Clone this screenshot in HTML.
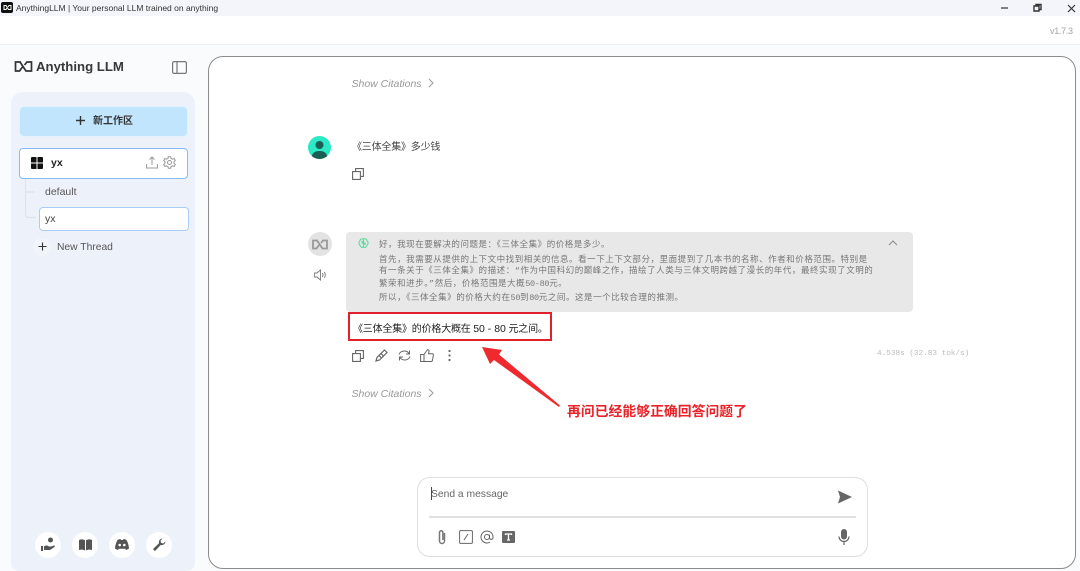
<!DOCTYPE html>
<html lang="zh"><head><meta charset="utf-8"><title>AnythingLLM</title>
<style>
html,body{margin:0;padding:0}
body{width:1080px;height:571px;overflow:hidden;background:#fff;position:relative;font-family:"Liberation Sans","Noto Sans CJK SC",sans-serif;color:#333}
div,svg{position:absolute}
#w{left:0;top:0;width:1080px;height:571px;filter:blur(.3px);overflow:hidden}
.t{white-space:nowrap}
.th{font-family:"Liberation Mono","Noto Sans CJK SC",monospace;font-size:8.5px;letter-spacing:.55px;color:#777;line-height:11px;left:379px}
.th span{letter-spacing:-.3px}
.ca{font-size:10px;letter-spacing:-.2px}
.ca span{font-size:10.500px;letter-spacing:0}
</style></head><body><div id="w">
<div style="left:0;top:0;width:1080px;height:16px;background:#f3f5fb"></div>
<div style="left:1px;top:2px;width:12px;height:11px;background:#111;border-radius:2px"></div>
<svg style="left:3px;top:4px" width="9" height="7" viewBox="0 0 18 14"><path d="M7 3H2v8h4l2-3M10 6l2-3h4v8h-5L6 3" fill="none" stroke="#fff" stroke-width="2"/></svg>
<div class="t" style="left:16px;top:2px;font-size:8.500px;line-height:12px;color:#333">AnythingLLM | Your personal LLM trained on anything</div>
<svg style="left:1000px;top:2px" width="76" height="12" viewBox="0 0 76 12"><path d="M1 6h7" stroke="#333" fill="none" stroke-width="1.200"/><path d="M34 4h5v5h-5zM36 4V2.500h5v5h-2" stroke="#333" fill="none" stroke-width="1.400"/><path d="M68 3l7 7M75 3l-7 7" stroke="#333" fill="none" stroke-width="1.200"/></svg>
<div class="t" style="left:1050px;top:25px;font-size:9px;line-height:12px;color:#a5a5a5;letter-spacing:-.3px">v1.7.3</div>
<div style="left:0;top:44px;width:1080px;height:527px;background:#f9fbfd;border-top:1px solid #eef0f4;box-sizing:border-box"></div>

<svg style="left:14px;top:60px" width="19" height="13" viewBox="0 0 19 13"><path d="M7 2H1.500v9H5.500L8.500 7M10.500 5L13 2h4.500v9H12L6 2" fill="none" stroke="#333" stroke-width="1.700"/></svg>
<div class="t" style="left:36px;top:58px;font-size:13.200px;line-height:18px;font-weight:bold;color:#383838">Anything LLM</div>
<svg style="left:172px;top:61px" width="15" height="13" viewBox="0 0 15 13"><rect x=".6" y=".6" width="13.800" height="11.800" rx="1.500" fill="none" stroke="#777" stroke-width="1.200"/><path d="M5 1v11" stroke="#777" stroke-width="1.200"/></svg>

<div style="left:11px;top:92px;width:184px;height:479px;background:#edf2fa;border-radius:12px 12px 8px 8px"></div>
<div style="left:19px;top:106px;width:169px;height:31px;background:#c0e5fd;border:1px solid #e2f2fe;box-sizing:border-box;border-radius:5px"></div>
<svg style="left:75px;top:115px" width="11" height="11"><path d="M5.500 1v9M1 5.500h9" stroke="#333" stroke-width="1.400"/></svg>
<div class="t" style="left:93px;top:115px;font-size:10px;line-height:14px;font-weight:bold;color:#333">新工作区</div>

<div style="left:19px;top:148px;width:169px;height:31px;background:#fff;border:1px solid #86bbf5;box-sizing:border-box;border-radius:4px"></div>
<svg style="left:31px;top:157px" width="12" height="12"><path d="M0 1a1 1 0 0 1 1-1h4.500v5.500H0zM6.500 0H11a1 1 0 0 1 1 1v4.500H6.500zM0 6.500h5.500V12H1a1 1 0 0 1-1-1zM6.500 6.500H12V11a1 1 0 0 1-1 1H6.500z" fill="#111"/></svg>
<div class="t" style="left:51px;top:156px;font-size:10.500px;line-height:14px;font-weight:bold;color:#222">yx</div>
<svg style="left:146px;top:156px" width="12" height="13" viewBox="0 0 12 13"><path d="M.6 8v4h10.800V8M6 9V1M3.500 3.500L6 1l2.500 2.500" fill="none" stroke="#999" stroke-width="1"/></svg>
<svg style="left:163px;top:156px" width="13" height="13" viewBox="0 0 13 13"><path d="M5.300.8h2.400l.4 1.700 1.500.7 1.600-.7 1.100 2-1.300 1.200v1.600l1.300 1.200-1.100 2-1.600-.7-1.500.7-.4 1.700H5.300l-.4-1.700-1.500-.7-1.600.7-1.100-2 1.300-1.200V5.700L.7 4.500l1.100-2 1.600.7 1.500-.7z" fill="none" stroke="#999"/><circle cx="6.500" cy="6.500" r="2" fill="none" stroke="#999"/></svg>

<svg style="left:23px;top:179px" width="14" height="41" viewBox="0 0 14 41"><path d="M2.500 0v35q0 3.500 3.500 3.500h7M2.500 13h9" fill="none" stroke="#dfe1e4" stroke-width="1.200"/></svg>
<div class="t" style="left:45px;top:185px;font-size:10.500px;line-height:14px;color:#555">default</div>
<div style="left:39px;top:207px;width:150px;height:24px;background:#fff;border:1px solid #a9cdf8;box-sizing:border-box;border-radius:4px"></div>
<div class="t" style="left:45px;top:212px;font-size:10.500px;line-height:14px;color:#444">yx</div>
<div style="left:33px;top:238px;width:18px;height:18px;border-radius:50%;background:#f1f4fa"></div>
<svg style="left:38px;top:242px" width="9" height="9"><path d="M4.500 .5v8M.5 4.500h8" stroke="#333" stroke-width="1.100"/></svg>
<div class="t" style="left:57px;top:240.500px;font-size:10.300px;line-height:14px;color:#555">New Thread</div>

<div style="left:35px;top:532px;width:26px;height:26px;border-radius:50%;background:#fff"></div>
<div style="left:72px;top:532px;width:26px;height:26px;border-radius:50%;background:#fff"></div>
<div style="left:109px;top:532px;width:26px;height:26px;border-radius:50%;background:#fff"></div>
<div style="left:146px;top:532px;width:26px;height:26px;border-radius:50%;background:#fff"></div>
<svg style="left:40px;top:537px" width="16" height="15" viewBox="0 0 16 15"><circle cx="10.500" cy="3" r="2.500" fill="#555"/><path d="M1 9h2v5H1zM4 9.500c2-1.500 3.500-1 5 0h2l3-1c1 0 1 1 .5 1.500L10 13H4z" fill="#555"/></svg>
<svg style="left:79px;top:539px" width="13" height="12" viewBox="0 0 13 12"><path d="M0 1c2-.8 4-.8 6 .3V11.500C4 10.500 2 10.500 0 11zM13 1c-2-.8-4-.8-6 .3V11.500c2-1 4-1 6-.5z" fill="#555"/></svg>
<svg style="left:115px;top:539px" width="14" height="11" viewBox="0 0 14 11"><path d="M2.500 1C4 .3 5 0 5.500 0l.5 1h2l.5-1c.5 0 1.500.3 3 1 1.500 2.500 2.300 5.500 2.500 8.500-1 .8-2 1.200-3 1.500l-.8-1.300H3.800L3 11c-1-.3-2-.7-3-1.500C.2 6.500 1 3.500 2.500 1z" fill="#555"/><circle cx="4.700" cy="6" r="1.300" fill="#fff"/><circle cx="9.300" cy="6" r="1.300" fill="#fff"/></svg>
<svg style="left:153px;top:538px" width="13" height="13" viewBox="0 0 13 13"><path d="M12.500 3.500A3.800 3.800 0 0 1 7.700 7L2.800 12.200a1.300 1.300 0 0 1-2-2L6 5.300A3.800 3.800 0 0 1 9.500.5L7.500 2.800l.6 2.100 2.100.6z" fill="#555"/></svg>

<div style="left:208px;top:56px;width:868px;height:513px;background:#fff;border:1px solid #8c8c8c;box-sizing:border-box;border-radius:15px"></div>

<div class="t" style="left:351.500px;top:77px;font-size:10.500px;line-height:14px;font-style:italic;color:#999">Show Citations</div>
<svg style="left:428px;top:78px" width="6" height="10"><path d="M1 1l4 4-4 4" fill="none" stroke="#999"/></svg>

<svg style="left:308px;top:136px;clip-path:circle(50%)" width="23" height="23" viewBox="0 0 23 23"><rect width="23" height="23" fill="#2ce8c4"/><circle cx="11.500" cy="9" r="4" fill="#1a5e56"/><path d="M3.500 23c0-6 3-8 8-8s8 2 8 8z" fill="#1a5e56"/></svg>
<div class="t ca" style="left:352px;top:141px;line-height:14px;color:#444">《三体全集》多少钱</div>
<svg style="left:352px;top:168px" width="12" height="12" viewBox="0 0 12 12"><path d="M.6 3.600h7.800v7.800H.6zM3.600 3.400V.6h7.800v7.800H8.600" stroke="#666" stroke-width="1.100" fill="none"/></svg>

<div style="left:308px;top:232px;width:24px;height:24px;border-radius:50%;background:#e3e3e3"></div>
<svg style="left:312px;top:239px" width="16" height="11" viewBox="0 0 16 11"><path d="M6 1.500H1v8h3.500L7 6M9 4l2-2.500h4v8h-4.500L5 1.500" fill="none" stroke="#999" stroke-width="1.800"/></svg>
<svg style="left:314px;top:269px" width="13" height="12" viewBox="0 0 13 12"><path d="M.6 4h2.400l3.500-3v10L3 8H.6zM8.500 4q1 2 0 4M10.500 3q1.500 3 0 6" fill="none" stroke="#777" stroke-width=".9"/></svg>

<div style="left:346px;top:232px;width:567px;height:80px;background:#e8e8e8;border-radius:4px"></div>
<svg style="left:358px;top:238px" width="11" height="11" viewBox="0 0 11 11"><path d="M5.500 1C3.800.3 2 1.200 2 2.800.6 3.500.6 6 1.800 6.800 2 8.800 4 10 5.500 9 7 10 9 8.800 9.200 6.800 10.400 6 10.400 3.500 9 2.800 9 1.200 7.200.3 5.500 1zM5.500 1v8M3 5h5M3.500 3l2 2M7.500 7l-2-2" fill="none" stroke="#5fd99b" stroke-width="1.100"/></svg>
<div class="t th" style="top:239.500px">好，我现在要解决的问题是：《三体全集》的价格是多少。</div>
<div class="t th" style="top:254.500px">首先，我需要从提供的上下文中找到相关的信息。看一下上下文部分，里面提到了几本书的名称、作者和价格范围。特别是</div>
<div class="t th" style="top:266px">有一条关于《三体全集》的描述：“作为中国科幻的巅峰之作，描绘了人类与三体文明跨越了漫长的年代，最终实现了文明的</div>
<div class="t th" style="top:278.500px">繁荣和进步。”然后，价格范围是大概<span>50-80</span>元。</div>
<div class="t th" style="top:292.500px">所以，《三体全集》的价格大约在<span>50</span>到<span>80</span>元之间。这是一个比较合理的推测。</div>
<svg style="left:888px;top:240px" width="10" height="6"><path d="M1 5l4-4 4 4" fill="none" stroke="#888"/></svg>

<div style="left:348px;top:312px;width:204px;height:29px;border:2px solid #e0202a;box-sizing:border-box"></div>
<div class="t ca" style="left:353px;top:321.500px;line-height:14px;color:#222">《三体全集》的价格大概在 <span>50 - 80</span> 元之间。</div>

<svg style="left:352px;top:350px" width="12" height="12" viewBox="0 0 12 12"><path d="M.6 3.600h7.800v7.800H.6zM3.600 3.400V.6h7.800v7.800H8.600" stroke="#666" stroke-width="1.100" fill="none"/></svg>
<svg style="left:375px;top:349px" width="13" height="13" viewBox="0 0 13 13"><path d="M9.500 1l2.500 2.500-7.500 7.500-3.500 1 1-3.500zM4 6.500l2.500 2.500M6 4.500L8.500 7" stroke="#666" stroke-width="1.200" fill="none"/></svg>
<svg style="left:398px;top:349px" width="13" height="13" viewBox="0 0 13 13"><path d="M1 5.500C2 3 4 2 6.500 2 8.500 2 10 3 11 4.500M11.500 1.500V5H8M12 7.500C11 10 9 11 6.500 11 4.500 11 3 10 2 8.500M1.500 11.500V8H5" stroke="#666" fill="none"/></svg>
<svg style="left:420px;top:349px" width="14" height="13" viewBox="0 0 14 13"><path d="M4 5.500v7H.6v-7zM4 5.500L7.500.6c1.200 0 1.800 1 1.500 2L8.500 4.800h4c.7 0 1 .6.900 1.200l-1 5.500c-.1.600-.6 1-1.200 1H4" stroke="#666" fill="none"/></svg>
<svg style="left:447px;top:349px" width="5" height="13"><circle cx="2.500" cy="2" r="1.100" fill="#666"/><circle cx="2.500" cy="6.500" r="1.100" fill="#666"/><circle cx="2.500" cy="11" r="1.100" fill="#666"/></svg>
<div class="t" style="left:877px;top:349px;font-family:'Liberation Mono',monospace;font-size:7.700px;line-height:11px;color:#bbb">4.538s (32.83 tok/s)</div>

<div class="t" style="left:351.500px;top:387px;font-size:10.500px;line-height:14px;font-style:italic;color:#999">Show Citations</div>
<svg style="left:428px;top:388px" width="6" height="10"><path d="M1 1l4 4-4 4" fill="none" stroke="#999"/></svg>

<svg style="left:478px;top:343px" width="84" height="66" viewBox="0 0 84 66"><path d="M4 4L24 7 21 11.500 82 62.500 81 64 16 17 12 21z" fill="#ee2a2f"/></svg>
<div class="t" style="left:567px;top:402px;font-size:13.850px;line-height:18px;font-weight:bold;color:#e8242a">再问已经能够正确回答问题了</div>

<div style="left:417px;top:477px;width:451px;height:80px;background:#fff;border:1px solid #dedede;box-sizing:border-box;border-radius:13px"></div>
<div style="left:431px;top:487px;width:1px;height:13px;background:#444"></div>
<div class="t" style="left:431px;top:487.500px;font-size:10.300px;line-height:14px;color:#666">Send a message</div>
<svg style="left:838px;top:490px" width="14" height="14" viewBox="0 0 14 14"><path d="M0 .5L14 7 0 13.500 2 7z" fill="#666"/></svg>
<div style="left:429px;top:516px;width:427px;height:1.500px;background:#e0e0e0"></div>
<svg style="left:437px;top:529px" width="10" height="16" viewBox="0 0 10 16"><path d="M7.500 4v8a2.500 2.500 0 0 1-5 0V3.500a1.700 1.700 0 0 1 3.400 0V11" fill="none" stroke="#777" stroke-width="1.500"/></svg>
<svg style="left:459px;top:530px" width="14" height="14" viewBox="0 0 14 14"><rect x=".6" y=".6" width="12.800" height="12.800" rx="1" fill="none" stroke="#666"/><path d="M5 10l4-6" stroke="#666"/></svg>
<svg style="left:480px;top:530px" width="14" height="14" viewBox="0 0 14 14"><circle cx="7" cy="7" r="2.500" fill="none" stroke="#666"/><path d="M9.500 4.500V8a1.800 1.800 0 0 0 3.500 0V7A6 6 0 1 0 10 12.200" fill="none" stroke="#666"/></svg>
<div style="left:502px;top:531px;width:13px;height:12px;background:#666;border-radius:1px"></div>
<svg style="left:502px;top:531px" width="13" height="12"><path d="M3.500 4V3h6v1M6.500 3v6M5 9h3" fill="none" stroke="#fff" stroke-width="1.300"/></svg>
<svg style="left:838px;top:529px" width="12" height="16" viewBox="0 0 12 16"><rect x="3" y="0" width="6" height="10.500" rx="3" fill="#666"/><path d="M1 7.500a5 5 0 0 0 10 0M6 12.500V16" fill="none" stroke="#666" stroke-width="1.200"/></svg>
</div></body></html>
